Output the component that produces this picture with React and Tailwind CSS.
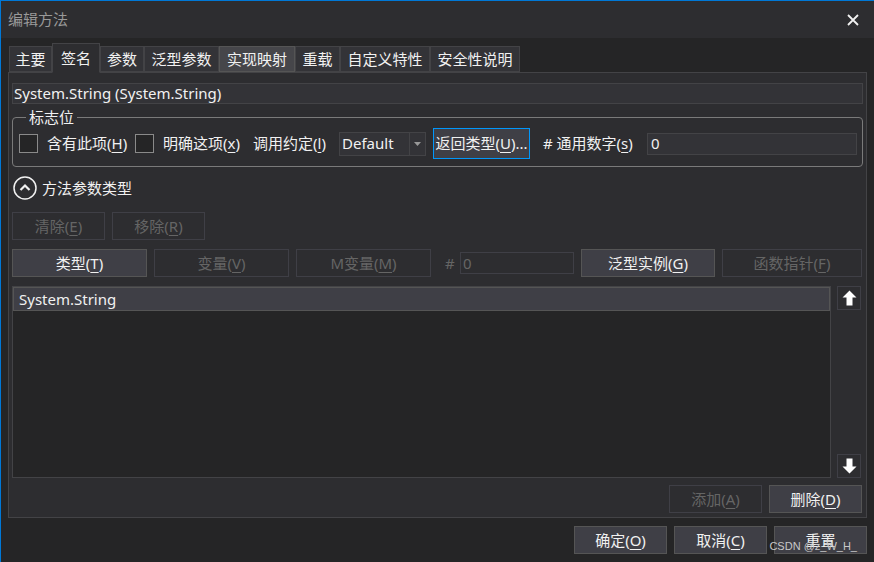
import React from 'react';

const FONT = "font-['Noto_Sans','Noto_Sans_CJK_SC',sans-serif]";

const TABS = [
  { label: '主要', w: 'w-[43px]' },
  { label: '签名', w: 'w-[48px]', active: true },
  { label: '参数', w: 'w-[44px]' },
  { label: '泛型参数', w: 'w-[75px]' },
  { label: '实现映射', w: 'w-[76px]', hover: true },
  { label: '重载', w: 'w-[45px]' },
  { label: '自定义特性', w: 'w-[90px]' },
  { label: '安全性说明', w: 'w-[90px]' },
];

// mnemonic letter
const K = ({ children }) => <span className="underline underline-offset-[3px]">{children}</span>;

function Btn({ children, disabled, className = '' }) {
  return (
    <div
      className={`flex h-[28px] shrink-0 items-center justify-center border text-[15px] ${
        disabled
          ? 'border-[#3f3f46] bg-[#2d2d30] text-[#656565]'
          : 'border-[#555555] bg-[#3f3f46] text-[#f1f1f1]'
      } ${className}`}
    >
      {children}
    </div>
  );
}

function Arrow({ down }) {
  return (
    <div className="flex h-[24px] w-[24px] items-center justify-center border border-[#3f3f46]">
      <svg width="15" height="16" viewBox="0 0 15 16" className={down ? 'rotate-180' : ''}>
        <polygon points="7.5,0.5 14.5,7.5 10.5,7.5 10.5,15.5 4.5,15.5 4.5,7.5 0.5,7.5" fill="#ffffff" />
      </svg>
    </div>
  );
}

export default function App() {
  return (
    <div
      className={`relative flex h-[562px] w-[874px] flex-col overflow-hidden border-l border-t border-[#0078d7] bg-[#252526] text-[#f1f1f1] ${FONT}`}
    >
      {/* Title bar */}
      <div className="flex h-[37px] shrink-0 items-center justify-between bg-[#2d2d30] pl-[7px] pr-[15px]">
        <span className="text-[15px] text-[#999999]">编辑方法</span>
        <svg width="12" height="12" viewBox="0 0 12 12">
          <path d="M1 1 L11 11 M11 1 L1 11" stroke="#f1f1f1" strokeWidth="1.8" />
        </svg>
      </div>

      <div className="flex flex-col pl-[7px] pr-[7px]">
        {/* Tabs */}
        <div className="mt-[5px] flex h-[29px] items-end pl-[1px]">
          {TABS.map((t) => (
            <div
              key={t.label}
              className={`flex shrink-0 items-center justify-center border text-[15px] leading-[18px] ${t.w} ${
                t.active
                  ? 'relative z-10 -mb-px h-[30px] border-[#434346] border-b-[#2d2d30] bg-[#2d2d30]'
                  : t.hover
                  ? 'h-[26px] border-[#555555] bg-[#46464a]'
                  : 'h-[26px] border-[#434346] bg-[#333337]'
              }`}
            >
              {t.label}
            </div>
          ))}
        </div>

        {/* Panel */}
        <div className="flex h-[446px] flex-col border border-[#434346] bg-[#2d2d30] px-[3px]">
          <div className="mt-[10px] flex h-[21px] items-center border border-[#434346] bg-[#333337] pl-[1px] text-[15px]">
            System.String (System.String)
          </div>

          {/* Group box */}
          <fieldset className="mt-[5px] rounded-[4px] border border-[#7a7a7a] pb-[7px] pl-[6px]">
            <legend className="ml-[7px] px-[3px] text-[15px] leading-[16px]">标志位</legend>
            <div className="mt-[3px] flex h-[31px] items-center text-[15px]">
              <div className="h-[19px] w-[19px] shrink-0 border border-[#8a8a8a] bg-[#252526]" />
              <div className="w-[97px] shrink-0 pl-[9px]">
                含有此项(<K>H</K>)
              </div>
              <div className="h-[19px] w-[19px] shrink-0 border border-[#8a8a8a] bg-[#252526]" />
              <div className="w-[99px] shrink-0 pl-[9px]">
                明确这项(<K>x</K>)
              </div>
              <div className="w-[86px] shrink-0">
                调用约定(<K>l</K>)
              </div>
              <div className="flex h-[24px] w-[87px] shrink-0 items-center border border-[#434346] bg-[#333337]">
                <span className="flex-1 pl-[2px]">Default</span>
                <div className="flex h-full w-[16px] items-center justify-center border-l border-[#434346]">
                  <svg width="7" height="4" viewBox="0 0 7 4">
                    <polygon points="0,0 7,0 3.5,4" fill="#999999" />
                  </svg>
                </div>
              </div>
              <div className="ml-[7px] flex h-[31px] w-[97px] shrink-0 items-center justify-center border border-[#0097fb] bg-[#3f3f46]">
                返回类型(<K>U</K>)...
              </div>
              <div className="ml-[13px] w-[104px] shrink-0">
                # 通用数字(<K>s</K>)
              </div>
              <div className="flex h-[22px] w-[210px] shrink-0 items-center border border-[#434346] bg-[#333337] pl-[3px]">
                0
              </div>
            </div>
          </fieldset>

          {/* Expander */}
          <div className="mt-[9px] flex h-[24px] items-center gap-[5px] pl-[1px]">
            <svg width="24" height="24" viewBox="0 0 24 24">
              <circle cx="12" cy="12" r="11" fill="none" stroke="#f1f1f1" strokeWidth="1.5" />
              <polyline points="7.5,14 12,9.5 16.5,14" fill="none" stroke="#f1f1f1" strokeWidth="2.2" />
            </svg>
            <span className="text-[15px]">方法参数类型</span>
          </div>

          {/* Buttons row 1 */}
          <div className="mt-[12px] flex gap-[7px]">
            <Btn disabled className="w-[93px]">
              清除(<K>E</K>)
            </Btn>
            <Btn disabled className="w-[93px]">
              移除(<K>R</K>)
            </Btn>
          </div>

          {/* Buttons row 2 */}
          <div className="mt-[9px] flex items-center gap-[7px]">
            <Btn className="w-[135px]">
              类型(<K>T</K>)
            </Btn>
            <Btn disabled className="w-[135px]">
              变量(<K>V</K>)
            </Btn>
            <Btn disabled className="w-[135px]">
              M变量(<K>M</K>)
            </Btn>
            <span className="ml-[7px] w-[8px] text-[15px] text-[#656565]">#</span>
            <div className="flex h-[22px] w-[114px] shrink-0 items-center border border-[#3f3f46] pl-[2px] text-[15px] text-[#656565]">
              0
            </div>
            <Btn className="w-[134px]">
              泛型实例(<K>G</K>)
            </Btn>
            <Btn disabled className="w-[140px]">
              函数指针(<K>F</K>)
            </Btn>
          </div>

          {/* List + arrows */}
          <div className="mt-[9px] flex gap-[6px]">
            <div className="h-[192px] w-[819px] shrink-0 border border-[#434346] bg-[#252526]">
              <div className="flex h-[24px] items-center border border-[#555555] bg-[#3f3f46] pl-[5px] text-[15px]">
                System.String
              </div>
            </div>
            <div className="flex flex-col justify-between">
              <Arrow />
              <Arrow down />
            </div>
          </div>

          {/* Add / Delete */}
          <div className="mt-[7px] flex justify-end gap-[7px] pr-[1px]">
            <Btn disabled className="w-[93px]">
              添加(<K>A</K>)
            </Btn>
            <Btn className="w-[93px]">
              删除(<K>D</K>)
            </Btn>
          </div>
        </div>

        {/* Dialog buttons */}
        <div className="mt-[8px] flex justify-end gap-[7px]">
          <Btn className="w-[93px]">
            确定(<K>O</K>)
          </Btn>
          <Btn className="w-[93px]">
            取消(<K>C</K>)
          </Btn>
          <Btn className="w-[93px]">重置</Btn>
        </div>
      </div>

      {/* watermark */}
      <div className="absolute bottom-[8px] right-[17px] font-['Liberation_Sans',sans-serif] text-[11px] text-[#c8c8c8]">
        CSDN @z_W_H_
      </div>
    </div>
  );
}
